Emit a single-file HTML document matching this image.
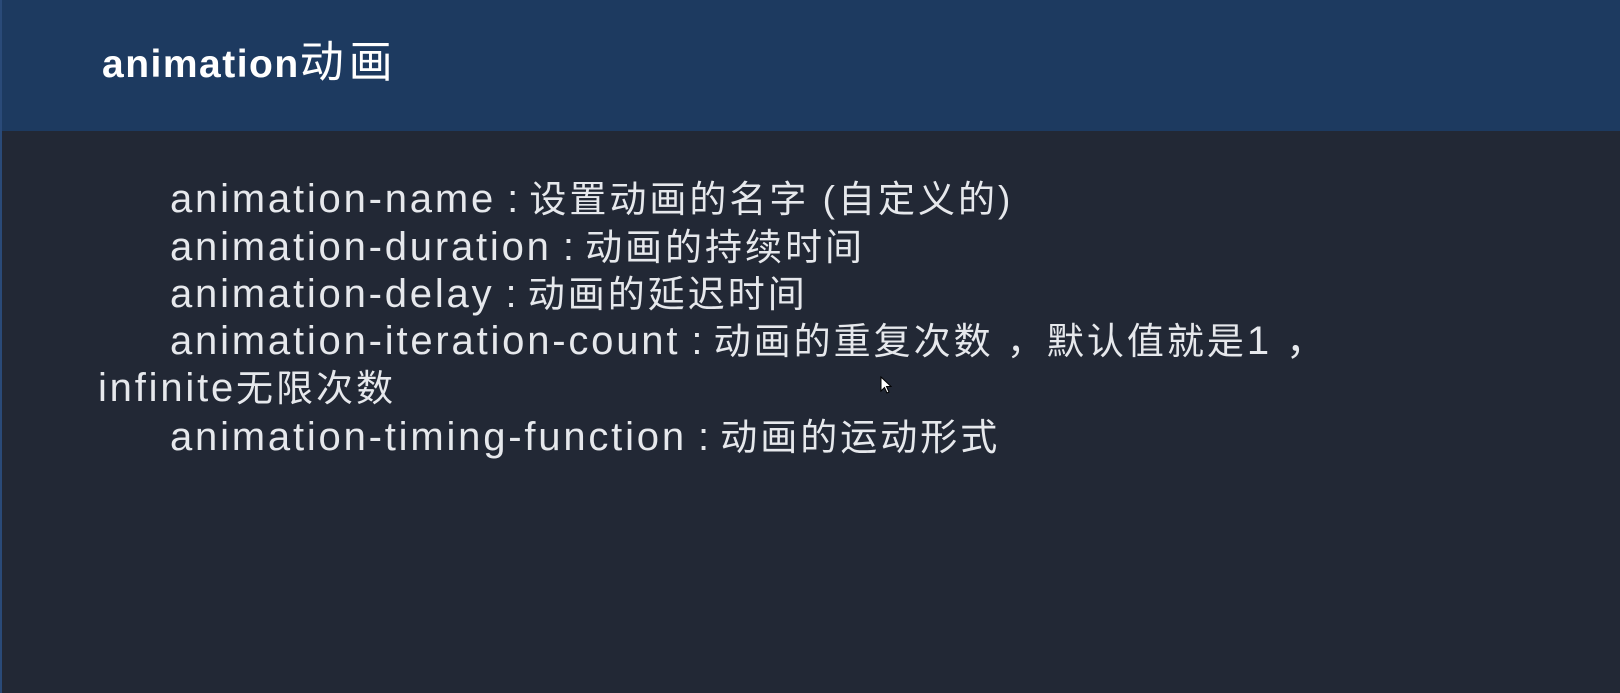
<!DOCTYPE html>
<html><head><meta charset="utf-8"><style>
html,body{margin:0;padding:0;}
body{width:1620px;height:693px;background:#222835;position:relative;overflow:hidden;font-family:"Liberation Sans","Noto Sans CJK SC",sans-serif;color:#e6e8ec;}
.hdr{position:absolute;left:0;top:0;width:1620px;height:131px;background:#1d3a60;}
.edge{position:absolute;left:0;top:0;width:2px;height:693px;background:#2a4a78;}
.title{position:absolute;left:102px;top:39px;font-size:39px;font-weight:bold;color:#fff;line-height:48px;letter-spacing:1.5px;}
.title .c{font-weight:normal;font-size:44px;letter-spacing:5px;}
.l{position:absolute;font-size:40px;line-height:48px;white-space:nowrap;letter-spacing:2.8px;}
.l .c{font-size:37px;letter-spacing:3px;}
.s{letter-spacing:0;}
</style></head><body>
<div class="hdr"></div><div class="edge"></div>
<div class="title">animation<span class="c">动画</span></div>
<div class="l" style="left:170px;top:175px">animation-name<span class="s"> : </span><span class="c">设置动画的名字 (自定义的)</span></div>
<div class="l" style="left:170px;top:223px">animation-duration<span class="s"> : </span><span class="c">动画的持续时间</span></div>
<div class="l" style="left:170px;top:270px">animation-delay<span class="s"> : </span><span class="c">动画的延迟时间</span></div>
<div class="l" style="left:170px;top:317px">animation-iteration-count<span class="s"> : </span><span class="c">动画的重复次数 ，默认值就是</span>1 ，</div>
<div class="l" style="left:98px;top:364px">infinite<span class="c">无限次数</span></div>
<div class="l" style="left:170px;top:413px">animation-timing-function<span class="s"> : </span><span class="c">动画的运动形式</span></div>
<svg style="position:absolute;left:880px;top:376px" width="12" height="20" viewBox="0 0 12 20"><path d="M1 1 L1 15 L4.5 11.5 L7 17 L9 16 L6.5 10.5 L11 10.5 Z" fill="#fff" stroke="#000" stroke-width="1"/></svg>
</body></html>
